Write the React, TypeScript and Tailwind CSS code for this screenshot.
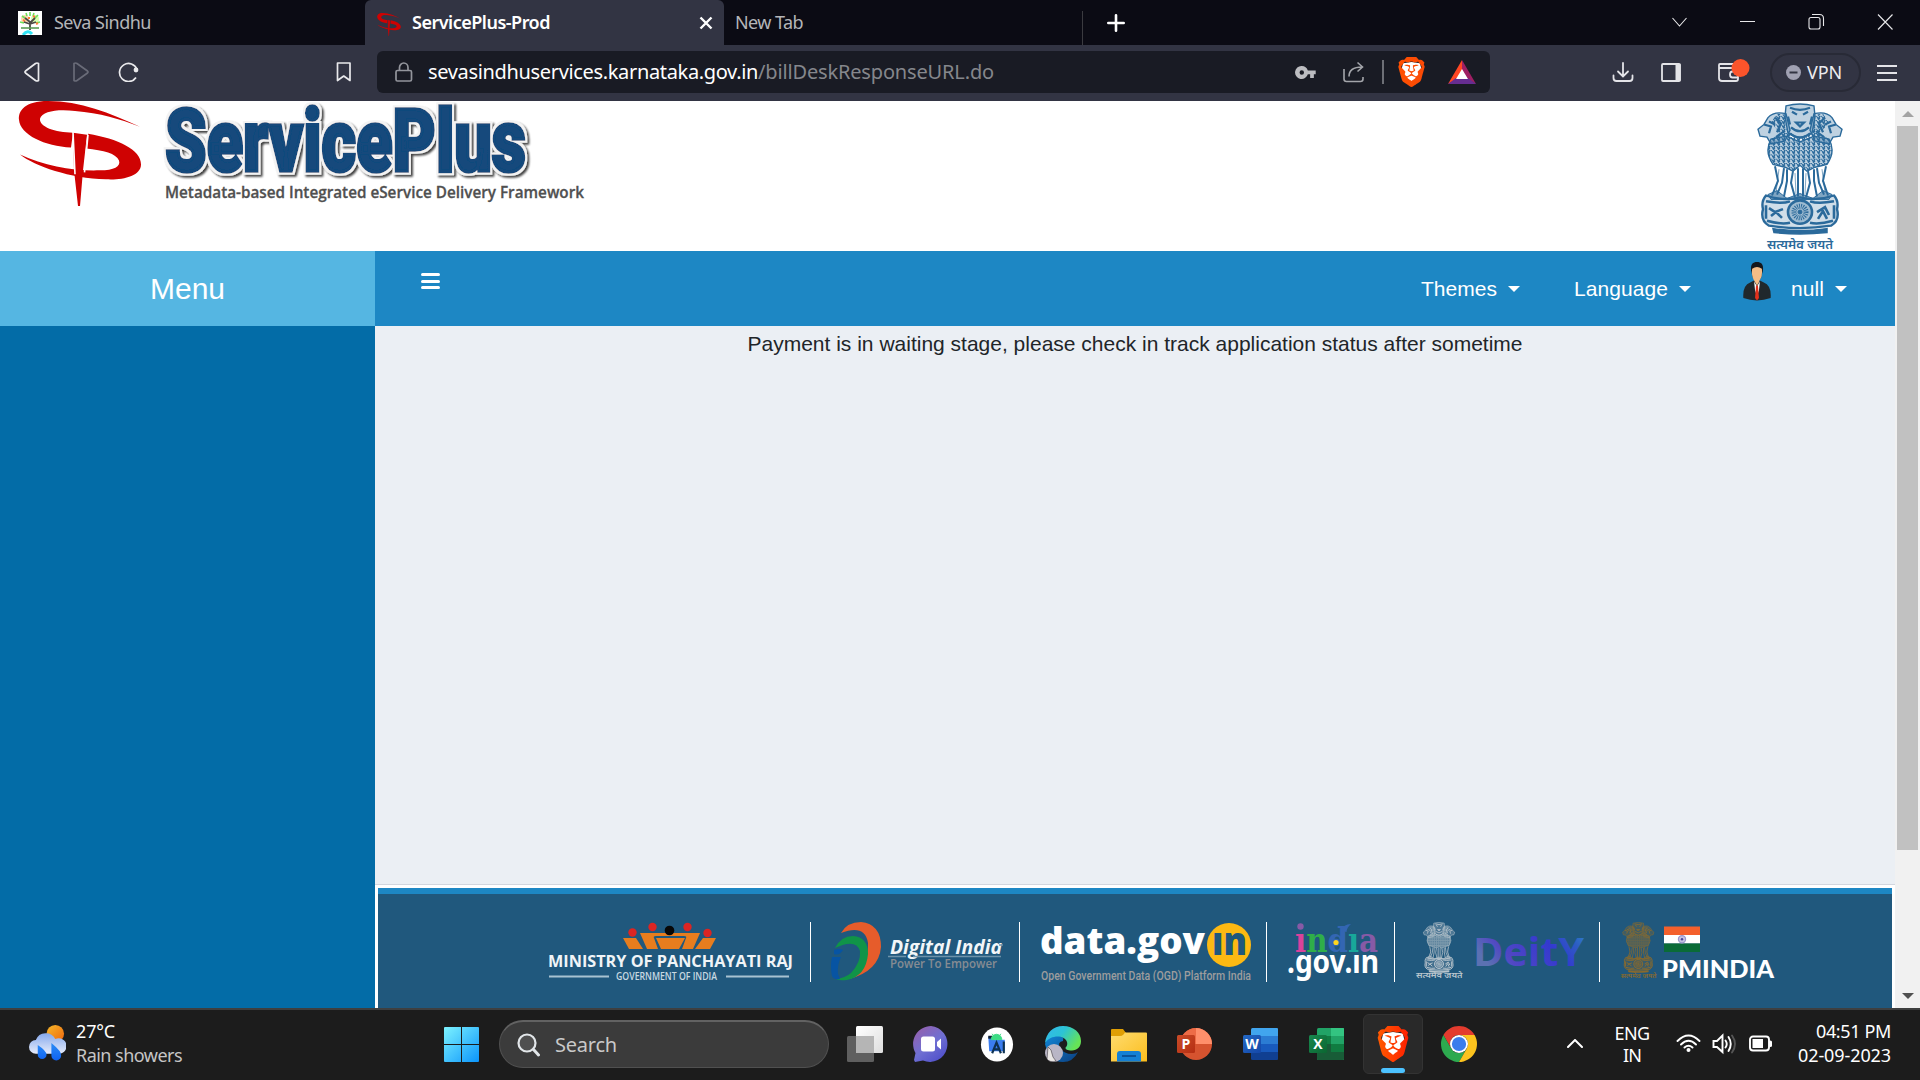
import { useLayoutEffect, useRef, useState } from "react";
import type { ReactNode } from "react";
import { SiBrave } from "react-icons/si";

/** Single-line text whose tracking is adjusted so that it fills a given width. */
function Fit({ w, className = "", children }: { w: number; className?: string; children: string }) {
  const ref = useRef<HTMLSpanElement>(null);
  const [gap, setGap] = useState(0);
  useLayoutEffect(() => {
    if (ref.current) {
      setGap((w - ref.current.getBoundingClientRect().width) / children.length);
    }
  }, []);
  return (
    <span ref={ref} className={"inline-block whitespace-pre " + className} style={{ letterSpacing: `${gap}px` }}>
      {children}
    </span>
  );
}

function ServiceMark({ className }: { className: string }) {
  return (
    <svg viewBox="18 0 124 106" className={className} preserveAspectRatio="none" fill="#cf0202">
      <path d="M140 26C110 12 80 0 48 0C25 0 18 10 19 19C20 34 45 46 71 47L73 32C55 32 39 26 40 18C42 10 58 8 75 10C100 12 120 18 140 26Z" />
      <path d="M88 33C118 38 141 49 141 64C141 76 122 80 106 79C70 78 35 66 20 54C45 66 75 71 100 70C114 70 121 66 119 60C116 53 104 50 86 48Z" />
      <path d="M73 32L87 34L83 70L80 106H78L74 70Z" />
      <path d="M73 31L75 74M88 34L84.500 72" stroke="currentColor" strokeWidth="1.600" />
    </svg>
  );
}

type EmblemProps = { id: string; color: string; className: string; textX?: number; textW?: number; boxX?: number; boxW?: number; size?: number };

function Emblem({ id, color, className, textX = 10, textW = 66, boxX = 0, boxW = 86, size = 13 }: EmblemProps) {
  return (
    <svg viewBox={`${boxX} 0 ${boxW} 152`} className={className} preserveAspectRatio="none" fill="none" stroke={color}>
      <defs>
        <pattern id={id} width="5" height="4.400" patternUnits="userSpaceOnUse">
          <path d="M0 1Q1.500 4 2.500 1T5 1M1 4L3 2.400" stroke={color} strokeWidth="1.500" fill="none" />
        </pattern>
      </defs>
      <g strokeWidth="1.400" fill={color} fillOpacity=".3">
        <path d="M29 3Q43 -1 57 3L58 14L55 31Q43 39 31 31L28 14Z" />
        <path d="M29 11Q17 8 11 15L7 22L1 27L3 34L10 35L14 42L28 39L33 28Z" />
        <path d="M57 11Q69 8 75 15L79 22L85 27L83 34L76 35L72 42L58 39L53 28Z" />
        <path d="M14 37Q7 50 16 63L28 66L36 70L43 64L50 70L58 66L70 63Q79 50 72 37L57 34L43 40L29 34Z" />
      </g>
      <path
        d="M14 37Q7 50 16 63L28 66L36 70L43 64L50 70L58 66L70 63Q79 50 72 37L57 28L43 36L29 28Z"
        fill={`url(#${id})`}
        stroke="none"
      />
      <path
        d="M29 12L20 11L14 20L25 34L30 30ZM57 12L66 11L72 20L61 34L56 30Z"
        fill={`url(#${id})`}
        stroke="none"
      />
      <path
        d="M35 9L40 12M51 9L46 12M39 20H47L43 24ZM34 25Q43 33 52 25M33 5Q43 9 53 5M31 14L33 22M55 14L53 22M7 22L14 24L12 31M79 22L72 24L74 31M18 15L24 21L20 30M68 15L62 21L66 30M19 35L27 29M67 35L59 29M12 19L18 22M74 19L68 22M33 31Q43 40 53 31"
        strokeWidth="2.200"
      />
      <path
        d="M18 65L21 80L15 95M27 67L25 82L20 94M30 68V80L27 96M36 70L34 82L38 97M41 67V96M46 67V96M51 70L53 82L49 97M57 68L57 80L60 96M60 67L62 82L67 94M69 65L66 80L71 95"
        strokeWidth="2"
      />
      <path d="M22 68L19 92M38 72L39 94M49 72L48 94M65 68L68 92" strokeWidth="1" opacity=".6" />
      <path d="M9 95Q4 101 6 109Q3 121 12 126Q43 131 74 126Q83 121 80 109Q82 101 77 95Q60 101 43 97Q26 101 9 95Z" strokeWidth="2.400" fill={color} fillOpacity=".22" />
      <path d="M11 94L20 90L30 98L43 93L56 98L66 90L75 94L72 99H14Z" fill={color} fillOpacity=".6" strokeWidth="1" />
      <path d="M9 101Q25 104 33 101M53 101Q61 104 77 101M10 121Q24 125 33 123M53 123Q62 125 76 121" strokeWidth="2.600" />
      <path d="M12 108L18 112L26 109M14 116L19 112L25 118M60 112L68 107L72 115M61 119L66 111L70 119M77 105V119M9 105V119" strokeWidth="2.600" />
      <circle cx="43" cy="112" r="12" strokeWidth="2.600" fill={color} fillOpacity=".3" />
      <circle cx="43" cy="112" r="6" strokeWidth="5" strokeDasharray=".9 1" />
      <circle cx="43" cy="112" r="2" fill={color} />
      <path d="M16 129Q43 133 70 129V133Q43 136 17 133Z" fill={color} strokeWidth="1.500" />
      <text
        x={textX}
        y="150"
        textLength={textW}
        lengthAdjust="spacingAndGlyphs"
        fill={color}
        stroke="none"
        fontSize={size}
        fontWeight="600"
        fontFamily="'Noto Sans Devanagari','Noto Sans',sans-serif"
      >
        सत्यमेव जयते
      </text>
    </svg>
  );
}

function Brave({ className, id, from, to }: { className: string; id: string; from: string; to: string }) {
  return (
    <span className={"relative block " + className}>
      <svg viewBox="0 0 24 24" className="absolute inset-0 size-full" preserveAspectRatio="none">
        <defs>
          <linearGradient id={id} x1="0" x2="1">
            <stop offset="0" stopColor={from} />
            <stop offset="1" stopColor={to} />
          </linearGradient>
        </defs>
        <path d="M5.5 5L12 4L18.500 5L19.500 9L17 18L12 21L7 18L4.500 9Z" fill="#fff" />
      </svg>
      <SiBrave preserveAspectRatio="none" className="absolute inset-0 size-full" style={{ fill: `url(#${id})` }} />
    </span>
  );
}

function TabStrip() {
  return (
    <div className="flex h-[45px] bg-[#0b0b14] text-[18px] leading-[45px] text-[#b4b5b8]">
      <div className="flex w-[365px] items-center pl-[18px]">
        <svg viewBox="0 0 24 24" className="h-6 w-6">
          <rect width="24" height="24" fill="#fff" />
          <circle cx="7" cy="8" r="4" fill="#ffd9b0" />
          <circle cx="17" cy="8" r="4" fill="#d8ffb0" />
          <path d="M4 5l3 2M2 11l4 1M20 4l-3 3M22 11l-4 1M12 1v4M8 2l1 3M16 2l-1 3" stroke="#6fe05a" strokeWidth="1.600" />
          <path d="M5 9l2 1M15 5l2 1M18 13l2-1M10 7h2" stroke="#ff7d3a" strokeWidth="2" />
          <path d="M12 19V11L7 7M12 12l5-5M12 13l6-2M12 13l-6-2" stroke="#4c4a45" strokeWidth="1.800" fill="none" />
          <path d="M3 17h18" stroke="#5a9d55" strokeWidth="1.600" />
          <path d="M5 24q5-6 9-1" stroke="#31e4f5" strokeWidth="3" fill="none" />
        </svg>
        <Fit w={97} className="ml-3">Seva Sindhu</Fit>
      </div>
      <div className="flex w-[359px] items-center rounded-t-md bg-[#323443] pl-3 text-white">
        <ServiceMark className="mt-1 h-[23px] w-6 text-[#323443]" />
        <Fit w={138} className="ml-[11px] font-semibold">ServicePlus-Prod</Fit>
        <svg viewBox="0 0 14 14" className="ml-auto mr-[11px] h-[14px] w-[14px]" stroke="#fff" strokeWidth="2.4">
          <path d="M1.500 1.500l11 11M12.500 1.500l-11 11" />
        </svg>
      </div>
      <div className="flex w-[359px] items-center pl-[11px]">
        <Fit w={68}>New Tab</Fit>
        <div className="ml-auto mt-[11px] h-[34px] w-px bg-[#3b3b40]" />
      </div>
      <svg viewBox="0 0 18 18" className="ml-6 mt-[14px] h-[18px] w-[18px]" stroke="#fff" strokeWidth="2.600" strokeLinecap="round">
        <path d="M9 1.300v15.400M1.300 9h15.400" />
      </svg>
      <svg viewBox="0 0 221 17" className="ml-auto mr-[27px] mt-[13px] h-[17px] w-[221px]" fill="none" stroke="#e8e8ea" strokeWidth="1.100">
        <path d="M.5 5l7 8l7-8M68 8.500h15" />
        <rect x="137" y="4.500" width="11" height="11.500" rx="2" />
        <path d="M140 1.500h7.500q4 0 4 4v7.500M206 1.500l14.500 15M220.500 1.500l-14.500 15" />
      </svg>
    </div>
  );
}

function Toolbar() {
  return (
    <div className="flex h-14 items-start bg-[#323443]">
      <svg viewBox="0 0 340 20" className="ml-6 mt-[17px] h-5 w-[340px]" fill="none" stroke="#e9e9ec" strokeWidth="1.700" strokeLinejoin="round">
        <path d="M14.500 1.500v17q-1.500 1-3 0L1.500 11q-1-1 0-2L11.500 1.500q1.500-1 3 0Z" />
        <path stroke="#696b78" d="M50 1.500v17q1.500 1 3 0L63.500 11q1-1 0-2L53 1.500q-1.500-1-3 0Z" />
        <path d="M112 15.500A9 9 0 1 1 113 7.500" />
        <circle cx="112" cy="8" r="2.400" fill="#e9e9ec" stroke="none" />
        <path d="M313.500 1h12.500v17.500l-6.250-4.500l-6.250 4.500Z" />
      </svg>
      <div className="ml-[13px] mt-[6px] flex h-[42px] w-[1113px] items-center rounded-md bg-[#191b24] text-[20px]">
        <svg viewBox="0 0 18 20" className="ml-[18px] h-5 w-[18px]" fill="none" stroke="#93959c" strokeWidth="1.700">
          <rect x="1" y="8.500" width="15.500" height="10.500" rx="1.500" />
          <path d="M4.500 8.500V5.500a4.250 4.500 0 0 1 8.500 0v3" />
        </svg>
        <Fit w={330} className="ml-[15px] text-white">sevasindhuservices.karnataka.gov.in</Fit>
        <Fit w={236} className="text-[#85878c]">/billDeskResponseURL.do</Fit>
        <svg viewBox="0 0 22 14" className="ml-auto h-[13px] w-[21px]">
          <path
            fill="#bcbdc1"
            fillRule="evenodd"
            d="M7 0a7 7 0 0 1 6.500 4.800H22v4h-2V13h-4V8.800h-2.500A7 7 0 1 1 7 0ZM7 4.600a2.400 2.400 0 1 0 0 4.800a2.400 2.400 0 0 0 0-4.800Z"
          />
        </svg>
        <svg viewBox="0 0 22 22" className="ml-[27px] h-[22px] w-[22px]" fill="none" stroke="#a3a5aa" strokeWidth="1.600">
          <path d="M1 8v10q0 2.500 2.500 2.500h14q2.500 0 2.500-2.500v-2M6 15.500Q6 6 19 6M14.500 1.500l5 4.500l-5 4.500" />
        </svg>
        <div className="ml-[17px] h-6 w-[2px] bg-[#6d6f76]" />
        <Brave className="ml-[12px] h-[30px] w-[31px]" id="braveBar" from="#ff5000" to="#fb4a06" />
        <svg viewBox="0 0 28 24" className="ml-[21px] mr-[14px] h-6 w-7">
          <path d="M14 0L0 24L14 16Z" fill="#ff4724" />
          <path d="M14 0L28 24L14 16Z" fill="#9e1f63" />
          <path d="M0 24H28L20 18H8Z" fill="#662d91" />
          <path d="M14 9L8 19H20Z" fill="#fff" />
        </svg>
      </div>
      <svg viewBox="0 0 140 24" className="ml-[122px] mt-[13px] h-6 w-[140px]" fill="none" stroke="#e4e4e8" strokeWidth="1.800">
        <path d="M11 5v13M6 13.500l5 5l5-5M1.500 17.500v2.500q0 3 3 3h13q3 0 3-3v-2.500" strokeLinecap="round" />
        <rect x="50" y="6" width="18" height="17" rx="1" />
        <path d="M66 6v17" strokeWidth="5" />
        <path d="M108 6h15q3 0 3 3v12q0 2-2 2h-14q-3 0-3-3V7q0-1 1-1ZM107 10h18M126 13.500h-5.500q-2.500 0-2.500 3t2.500 3h5.500" />
        <ellipse cx="128.500" cy="10" rx="9" ry="9" fill="#fb542b" stroke="none" />
      </svg>
      <div className="ml-[18px] mt-2 flex h-[39px] w-[91px] items-center rounded-full border-2 border-[#282a36] pl-[14px] text-[18px] text-[#ececf0]">
        <svg viewBox="0 0 15 15" className="h-[15px] w-[15px]">
          <circle cx="7.500" cy="7.500" r="7.500" fill="#a0a1b2" />
          <path d="M3.500 7.500h8" stroke="#323443" strokeWidth="2" />
        </svg>
        <Fit w={35} className="ml-[6px]">VPN</Fit>
      </div>
      <div className="ml-4 mt-5 flex w-5 flex-col gap-[5px]">
        <div className="h-[2px] bg-[#e4e4e8]" />
        <div className="h-[2px] bg-[#e4e4e8]" />
        <div className="h-[2px] bg-[#e4e4e8]" />
      </div>
    </div>
  );
}

function Header() {
  return (
    <header className="flex h-[150px] shrink-0 justify-between bg-white">
      <div className="flex">
        <ServiceMark className="ml-[18px] h-[105px] w-[124px] text-white" />
        <svg viewBox="0 0 440 112" className="ml-[18px] h-[112px] w-[440px]">
          <defs>
            <filter id="wordShadow" x="-5%" y="-10%" width="115%" height="130%">
              <feMorphology in="SourceAlpha" operator="dilate" radius="2" result="wide" />
              <feFlood floodColor="#f3f3f3" />
              <feComposite in2="wide" operator="in" result="rim" />
              <feGaussianBlur in="wide" stdDeviation="1.300" />
              <feOffset dx="1.500" dy="2" />
              <feComponentTransfer result="shade">
                <feFuncA type="linear" slope=".75" />
              </feComponentTransfer>
              <feMerge>
                <feMergeNode in="shade" />
                <feMergeNode in="rim" />
                <feMergeNode in="SourceGraphic" />
              </feMerge>
            </filter>
          </defs>
          <text
            x="5"
            y="70"
            textLength="361"
            lengthAdjust="spacingAndGlyphs"
            fontFamily="Roboto, sans-serif"
            fontWeight="900"
            fontSize="87"
            strokeLinejoin="miter"
            fill="#124a7c"
            stroke="#124a7c"
            strokeWidth="3.600"
            filter="url(#wordShadow)"
          >
            ServicePlus
          </text>
          <text x="5" y="97" textLength="419" lengthAdjust="spacingAndGlyphs" fontFamily="'Open Sans', sans-serif" fontWeight="600" fontSize="16" fill="#505050" stroke="#505050" strokeWidth=".3">
            Metadata-based Integrated eService Delivery Framework
          </text>
        </svg>
      </div>
      <Emblem id="maneMain" color="#2b6a9b" className="mr-[52px] mt-[2px] h-[148px] w-[86px]" />
    </header>
  );
}

function Caret() {
  return <div className="h-0 w-0 border-x-[6px] border-t-[6px] border-x-transparent border-t-white" />;
}

function NavBar() {
  return (
    <nav className="flex h-[75px] bg-[#1d87c4] text-[21px] leading-[75px] text-white">
      <div className="ml-[46px] mt-[22px] flex h-4 w-[19px] flex-col justify-between">
        <div className="h-[3px] rounded-sm bg-white" />
        <div className="h-[3px] rounded-sm bg-white" />
        <div className="h-[3px] rounded-sm bg-white" />
      </div>
      <div className="ml-auto flex items-center">
        <Fit w={76}>Themes</Fit>
        <div className="ml-[11px]"><Caret /></div>
      </div>
      <div className="ml-[54px] flex items-center">
        <Fit w={94}>Language</Fit>
        <div className="ml-[11px]"><Caret /></div>
      </div>
      <div className="ml-[51px] flex items-center">
        <svg viewBox="0 0 30 40" className="-mt-[15px] h-[39px] w-[30px]">
          <path d="M9 9C8 2 11 0 15 0S22 2 21 9L19 17H11Z" fill="#15171b" />
          <path d="M10 7Q15 3 20 7Q21 15 17.500 19V23L15 27L12 23V19Q9 14 10 7Z" fill="#f5bd86" />
          <path d="M1 37Q0 24 8 21L12 19L15 24L18 19L22 21Q30 24 29 37Q15 42 1 37Z" fill="#20282c" />
          <path d="M12 20L15 25L18 20L17 29L15 35L13 29Z" fill="#fff" />
          <path d="M14 24H16L17 37L15 39.500L13 37Z" fill="#e2311c" />
        </svg>
        <Fit w={33} className="ml-[19px]">null</Fit>
        <div className="ml-[11px] mr-12"><Caret /></div>
      </div>
    </nav>
  );
}

function Divider() {
  return <div className="h-[60px] w-px shrink-0 bg-white" />;
}

function Footer() {
  return (
    <footer className="flex h-full items-start border-x-[3px] border-white bg-[#20587d] pt-[28px]">
      <svg viewBox="0 0 262 60" className="ml-[170px] h-[60px] w-[262px]" fontFamily="'Open Sans', sans-serif">
        <g fill="#e77d1e">
          <path d="M75 16H88L95 27H81Z" />
          <path d="M92 11H152L145 27H134L138 16Q139 14 136 14H108Q105 14 106 16L110 27H99Z" />
          <path d="M108 16H137L131 27H113Z" />
          <path d="M155 16H168L162 27H147Z" />
        </g>
        <g fill="#dc2523">
          <circle cx="84.500" cy="10.500" r="4.200" />
          <circle cx="104.500" cy="5" r="4.200" />
          <circle cx="139.500" cy="5" r="4.200" />
          <circle cx="159.500" cy="11" r="4.200" />
        </g>
        <circle cx="121.500" cy="8.500" r="4.800" fill="#070707" />
        <text x="0" y="45" textLength="245" lengthAdjust="spacingAndGlyphs" fontSize="16.500" fontWeight="700" fill="#f0f4f7">
          MINISTRY OF PANCHAYATI RAJ
        </text>
        <path d="M1 54.500H61M178 54.500H241" stroke="#a8c2d1" strokeWidth="2.200" />
        <text x="68" y="57.500" textLength="101" lengthAdjust="spacingAndGlyphs" fontSize="10" fontWeight="600" fill="#c8d8e2">
          GOVERNMENT OF INDIA
        </text>
      </svg>
      <Divider />
      <svg viewBox="0 0 208 60" className="h-[60px] w-[208px]" fontFamily="'Open Sans', sans-serif">
        <path d="M30 11Q36 0 50 0Q70 2 70 25Q68 49 38 57Q58 43 57 21Q54 2 30 11Z" fill="#e65c2b" />
        <path d="M24 26Q30 14 42 14Q57 15 57 32Q55 54 36 58Q28 59 25 57Q34 56 40 51Q50 40 49 29Q45 16 24 26Z" fill="#109448" />
        <path d="M23 28Q28 26 32 28Q28 34 23 32ZM21 35H30Q26 43 27 52L29 57Q23 58 21 54Q19 44 21 35Z" fill="#0754a3" />
        <text x="79" y="32" textLength="112" lengthAdjust="spacingAndGlyphs" fontSize="19" fontWeight="700" fontStyle="italic" fill="#f2f6f8">
          Digital India
        </text>
        <path d="M188 23H192M77 34.500H95M102 34.500H190" stroke="#6d93ab" strokeWidth="1.300" />
        <text x="79" y="46" textLength="107" lengthAdjust="spacingAndGlyphs" fontSize="12" fontWeight="600" fill="#868c93">
          Power To Empower
        </text>
      </svg>
      <Divider />
      <svg viewBox="0 0 246 60" className="h-[60px] w-[246px]" fontFamily="'Open Sans', sans-serif">
        <text x="20" y="32" textLength="165" lengthAdjust="spacingAndGlyphs" fontSize="37" fontWeight="800" fill="#fff">
          data.gov
        </text>
        <circle cx="209" cy="23" r="22" fill="#fdb913" />
        <text x="192" y="33" textLength="35" lengthAdjust="spacingAndGlyphs" fontSize="39" fontWeight="800" fill="#20587d">
          ın
        </text>
        <text x="21" y="57.500" textLength="210" lengthAdjust="spacingAndGlyphs" fontFamily="Roboto, sans-serif" fontSize="12.500" fontWeight="500" fill="#9d9d9d">
          Open Government Data (OGD) Platform India
        </text>
      </svg>
      <Divider />
      <svg viewBox="0 0 127 60" className="h-[60px] w-[127px]" fontWeight="700">
        <text x="28" y="30" textLength="83" lengthAdjust="spacingAndGlyphs" fontFamily="'DejaVu Serif', serif" fontSize="34">
          <tspan fill="#d9429b">ı</tspan>
          <tspan fill="#2fae49">n</tspan>
          <tspan fill="#3366b3">d</tspan>
          <tspan fill="#18a79a">ı</tspan>
          <tspan fill="#875aa6">a</tspan>
        </text>
        <circle cx="33.500" cy="4.500" r="3.200" fill="#875aa6" />
        <path d="M75 9Q76 2 84 2Q80 5 79.500 10Z" fill="#3366b3" />
        <circle cx="69" cy="20.500" r="3.800" fill="#3366b3" />
        <circle cx="69" cy="20.500" r="2.600" fill="#ffd51c" />
        <text x="20" y="51" textLength="92" lengthAdjust="spacingAndGlyphs" fontFamily="'Noto Sans', sans-serif" fontSize="33" fontWeight="700" fill="#fff">
          .gov.ın
        </text>
      </svg>
      <Divider />
      <div className="flex w-[204px]">
        <Emblem id="maneDeity" color="#b9c5cd" className="ml-[19px] h-[57px] w-[50px]" boxX={-24} boxW={134} textX={-19} textW={125} size={21} />
        <svg viewBox="0 0 120 60" className="ml-[8px] h-[60px] w-[120px]">
          <defs>
            <linearGradient id="deity" x1="0" x2="1" y1=".4" y2="0">
              <stop offset="0" stopColor="#5b71b2" />
              <stop offset=".2" stopColor="#5147c4" />
              <stop offset=".6" stopColor="#3439cf" />
              <stop offset=".8" stopColor="#2d5cc4" />
              <stop offset="1" stopColor="#2e8fc9" />
            </linearGradient>
          </defs>
          <text
            x="1"
            y="44"
            textLength="111"
            lengthAdjust="spacingAndGlyphs"
            className="[font-variant-ligatures:none]"
            fontFamily="'Open Sans', sans-serif"
            fontWeight="700"
            fontSize="40"
            fill="url(#deity)"
          >
            DeitY
          </text>
        </svg>
      </div>
      <Divider />
      <div className="flex">
        <Emblem id="manePm" color="#8a6a2c" className="ml-[20px] h-[57px] w-[38px]" boxX={-6} boxW={102} textX={-4} textW={96} size={18} />
        <svg viewBox="0 0 116 60" className="ml-[5px] h-[60px] w-[116px]">
          <path d="M1 4.500H37V13H1Z" fill="#f4602c" />
          <path d="M1 13H37V21.500H1Z" fill="#fff" />
          <path d="M1 21.500H37V30H1Z" fill="#0a6b37" />
          <circle cx="19" cy="17.300" r="3.600" fill="#c5c2e2" stroke="#9a95cc" strokeWidth="1.200" />
          <circle cx="19" cy="17.300" r="1.200" fill="#4a459b" />
          <text x="-1" y="56" textLength="112" lengthAdjust="spacingAndGlyphs" fontFamily="Lato, sans-serif" fontWeight="900" fontSize="25.500" fill="#fff">
            PMINDIA
          </text>
        </svg>
      </div>
    </footer>
  );
}

function Page() {
  return (
    <div className="flex h-[907px] bg-white font-['Liberation_Sans',Arial,sans-serif]">
      <div className="flex w-[1895px] flex-col">
        <Header />
        <div className="flex flex-1">
          <aside className="w-[375px] bg-[#036ca7]">
            <div className="flex h-[75px] items-center justify-center bg-[#55b6e2] text-[30px] text-white">Menu</div>
          </aside>
          <div className="flex w-[1520px] flex-col">
            <NavBar />
            <main className="flex h-[559px] justify-center border-b border-[#d2d6de] bg-[#ebeff4] pt-[3px] text-[21px] leading-[30px] text-[#212529]">
              <p><Fit w={775}>Payment is in waiting stage, please check in track application status after sometime</Fit></p>
            </main>
            <div className="mx-[3px] mt-[3px] h-[6px] bg-[#1d87c4]" />
            <div className="h-[114px]"><Footer /></div>
          </div>
        </div>
      </div>
      <div className="flex w-[25px] flex-col items-center bg-[#f1f1f1]">
        <div className="mt-[10px] h-0 w-0 border-x-[6px] border-b-[6px] border-x-transparent border-b-[#a3a3a3]" />
        <div className="mt-[9px] h-[724px] w-[21px] bg-[#c1c1c1]" />
        <div className="mb-[9px] mt-auto h-0 w-0 border-x-[6px] border-t-[6px] border-x-transparent border-t-[#505050]" />
      </div>
    </div>
  );
}

function Slot({ children }: { children: ReactNode }) {
  return <div className="flex h-[60px] w-[66px] items-center justify-center">{children}</div>;
}

function OfficeBadge({ letter, from, to, id }: { letter: string; from: string; to: string; id: string }) {
  return (
    <>
      <defs>
        <linearGradient id={id} x1="0" y1="0" x2="1" y2="1">
          <stop offset="0" stopColor={from} />
          <stop offset="1" stopColor={to} />
        </linearGradient>
      </defs>
      <rect x="0" y="9" width="18" height="18" rx="1.500" fill={`url(#${id})`} />
      <text x="9" y="23.200" textAnchor="middle" fontFamily="'Open Sans', sans-serif" fontWeight="700" fontSize="14" fill="#fff">
        {letter}
      </text>
    </>
  );
}

function Taskbar() {
  return (
    <div className="flex h-[72px] border-t-2 border-[#3e3f40] bg-[#1c1c1c] text-[18px] leading-6 text-white">
      <div className="flex w-[444px] pl-[29px] pt-[9px]">
        <svg viewBox="0 0 38 38" className="mt-[5px] h-[38px] w-[37px]">
          <defs>
            <linearGradient id="sun" x1="0" y1="0" x2="1" y2="1">
              <stop offset="0" stopColor="#f5b92b" />
              <stop offset="1" stopColor="#f0640c" />
            </linearGradient>
            <linearGradient id="cloud" x1="0" y1="0" x2="0" y2="1">
              <stop offset="0" stopColor="#86a9ec" />
              <stop offset="1" stopColor="#e6ecfb" />
            </linearGradient>
            <linearGradient id="drop" x1="0" y1="0" x2="0" y2="1">
              <stop offset="0" stopColor="#2b8cf5" />
              <stop offset="1" stopColor="#0f62f0" />
            </linearGradient>
          </defs>
          <circle cx="27" cy="9.500" r="9" fill="url(#sun)" />
          <path d="M7 16A11 11 0 0 1 27 15A8 8 0 1 1 29 30H7A7 7 0 0 1 7 16Z" fill="url(#cloud)" />
          <path d="M9 21Q18 27 18 31A4.500 4.500 0 0 1 9 31ZM23 19Q34 28 33 32A5 5 0 0 1 23 32Z" fill="url(#drop)" />
        </svg>
        <div className="ml-[10px] flex flex-col items-start">
          <Fit w={39}>27°C</Fit>
          <Fit w={106} className="text-[#c5c5c5]">Rain showers</Fit>
        </div>
      </div>
      <svg viewBox="0 0 35 35" className="mt-[17px] h-[35px] w-[35px]">
        <defs>
          <linearGradient id="win" x1="0" y1="0" x2="1" y2="1">
            <stop offset="0" stopColor="#7df3ff" />
            <stop offset="1" stopColor="#0b94fb" />
          </linearGradient>
        </defs>
        <path d="M1 0H17V17H0V1Q0 0 1 0ZM18 0H34Q35 0 35 1V17H18ZM0 18H17V35H1Q0 35 0 34ZM18 18H35V34Q35 35 34 35H18Z" fill="url(#win)" />
      </svg>
      <div className="ml-5 mt-[10px] flex h-12 w-[330px] items-center rounded-full border border-t-2 border-[#505050] border-t-[#626262] bg-[#3b3b3b] text-[20px] text-[#c9c9c9]">
        <svg viewBox="0 0 24 24" className="ml-[17px] h-6 w-6" fill="#4f4f4f" stroke="#e2e6e9" strokeLinecap="round">
          <circle cx="10" cy="10" r="8.500" strokeWidth="2.200" />
          <path d="M16.500 16.500l5 5.500" strokeWidth="3" />
        </svg>
        <Fit w={62} className="ml-[14px]">Search</Fit>
      </div>
      <div className="ml-[3px] mt-1 flex">
        <Slot>
          <svg viewBox="0 0 36 36" className="h-9 w-9">
            <defs>
              <linearGradient id="tv" x1="0" y1="0" x2="1" y2="1">
                <stop offset="0" stopColor="#fff" />
                <stop offset="1" stopColor="#dedede" />
              </linearGradient>
            </defs>
            <rect x="9" y="0" width="27" height="27" rx="1.500" fill="url(#tv)" />
            <rect x="0" y="10" width="27" height="26" rx="1.500" fill="#5f5f5f" />
            <path d="M9 10H27V27H9Z" fill="#b5b5b5" />
          </svg>
        </Slot>
        <Slot>
          <svg viewBox="0 0 36 36" className="h-9 w-9">
            <defs>
              <linearGradient id="chat" x1=".1" y1=".2" x2=".7" y2="1">
                <stop offset="0" stopColor="#8e63b4" />
                <stop offset=".5" stopColor="#6f6fd2" />
                <stop offset="1" stopColor="#5252cb" />
              </linearGradient>
            </defs>
            <path d="M18 0A17.500 18 0 1 1 10 34.500L2 36L1 34L2.500 27A18 18 0 0 1 18 0Z" fill="url(#chat)" />
            <rect x="8" y="10.500" width="14" height="15" rx="2.500" fill="#fff" />
            <path d="M24 16L28 12.500V23.500L24 20Z" fill="#fff" />
          </svg>
        </Slot>
        <Slot>
          <svg viewBox="0 0 34 36" className="h-[35px] w-[34px]">
            <ellipse cx="17" cy="18" rx="16.500" ry="17.500" fill="#fff" />
            <path d="M8 10H13L14 13H25V25H9Z" fill="#3b7df0" />
            <path d="M8 9H12V12H8Z" fill="#123" />
            <path d="M11 13A5.500 5.500 0 0 1 22 13ZM12 7l2 3M21 7l-2 3" fill="#3ddc84" stroke="#3ddc84" />
            <path d="M12 27L16.500 16L21 27M14 23H19M24 15V27" fill="none" stroke="#0e3150" strokeWidth="2.200" />
          </svg>
        </Slot>
        <Slot>
          <svg viewBox="0 0 36 36" className="h-9 w-9">
            <defs>
              <linearGradient id="edgeTop" x1="0" y1="0" x2="1" y2=".5">
                <stop offset="0" stopColor="#34b7ec" />
                <stop offset=".5" stopColor="#2cc3d5" />
                <stop offset="1" stopColor="#66e356" />
              </linearGradient>
              <linearGradient id="edgeLow" x1="0" y1="0" x2="1" y2="1">
                <stop offset="0" stopColor="#1187d8" />
                <stop offset="1" stopColor="#0b3f80" />
              </linearGradient>
            </defs>
            <path d="M0 18Q2 9 11 9Q20 9 18 15Q12 16 15 22Q19 28 27 28Q31 28 33 26Q28 36 18 36Q4 36 0 18Z" fill="url(#edgeLow)" />
            <path d="M0 17C1 7 8 0 18 0C29 0 36 7 36 15C36 21 32 24.500 27 24.500C22 24.500 20.500 23 20.500 22C20.500 21 23 20 22 16C20 9 6 8 0 17Z" fill="url(#edgeTop)" />
            <circle cx="9" cy="27" r="9" fill="#b9b6c6" />
            <path d="M2 33L3 21L6 24L8 31L11 35Q5 37 2 33Z" fill="#e9e6e4" stroke="#565058" strokeWidth=".7" />
          </svg>
        </Slot>
        <Slot>
          <svg viewBox="0 0 36 33" className="mt-[2px] h-[33px] w-9">
            <defs>
              <linearGradient id="folder" x1="0" y1="0" x2="1" y2="1">
                <stop offset="0" stopColor="#ffdc6f" />
                <stop offset="1" stopColor="#fbbd1d" />
              </linearGradient>
            </defs>
            <path d="M0 1Q0 0 1 0H12L15 4V8H0Z" fill="#e09f05" />
            <path d="M0 7H9Q11 7 12.500 5.500L14 3.500H35Q36 3.500 36 4.500V32.500H0Z" fill="url(#folder)" />
            <path d="M6 32.500V25Q6 22 9 22H27Q30 22 30 25V32.500Z" fill="#1580d4" />
            <path d="M11 27H25" stroke="#0a4f94" strokeWidth="1.800" />
          </svg>
        </Slot>
        <Slot>
          <svg viewBox="0 0 36 36" className="h-9 w-9">
            <circle cx="19" cy="18" r="16" fill="#d6532f" />
            <path d="M19 2A16 16 0 0 0 3 18H19Z" fill="#ed6c47" />
            <path d="M19 2A16 16 0 0 1 35 18H19Z" fill="#ff8f6b" />
            <OfficeBadge letter="P" from="#ca4c28" to="#b52e12" id="ppt" />
          </svg>
        </Slot>
        <Slot>
          <svg viewBox="0 0 36 36" className="h-9 w-9">
            <path d="M9.500 2H34Q35 2 35 3V10H8V3.500Q8 2 9.500 2Z" fill="#41a5ee" />
            <path d="M8 10H35V18H8Z" fill="#2b7cd3" />
            <path d="M8 18H35V26H8Z" fill="#185abd" />
            <path d="M8 26H35V33Q35 34 34 34H9.500Q8 34 8 32.500Z" fill="#103f91" />
            <OfficeBadge letter="W" from="#2368c4" to="#1447a8" id="word" />
          </svg>
        </Slot>
        <Slot>
          <svg viewBox="0 0 36 36" className="h-9 w-9">
            <path d="M9.500 2H34Q35 2 35 3V33Q35 34 34 34H9.500Q8 34 8 32.500V3.500Q8 2 9.500 2Z" fill="#21a366" />
            <path d="M22 2H34Q35 2 35 3V10H22Z" fill="#33c481" />
            <path d="M8 10H22V18H8ZM22 18H35V26H22Z" fill="#107c41" />
            <path d="M8 18H22V26H35V33Q35 34 34 34H9.500Q8 34 8 32.500Z" fill="#185c37" />
            <OfficeBadge letter="X" from="#18884f" to="#0b6631" id="excel" />
          </svg>
        </Slot>
        <Slot>
          <div className="flex h-[60px] w-[60px] flex-col items-center rounded-md border border-[#333] bg-[#292929]">
            <Brave className="mt-[11px] h-9 w-9" id="braveTask" from="#ff5a00" to="#ff2000" />
            <div className="mt-[6px] h-[5px] w-6 rounded-full bg-[#4cc2ff]" />
          </div>
        </Slot>
        <Slot>
          <svg viewBox="2 2 44 44" className="h-9 w-9">
            <path d="M4.950 13A22 22 0 0 1 43.050 13H24A11 11 0 0 0 14.470 29.500Z" fill="#e33b2e" />
            <path transform="rotate(-120 24 24)" d="M4.950 13A22 22 0 0 1 43.050 13H24A11 11 0 0 0 14.470 29.500Z" fill="#2da94f" />
            <path transform="rotate(120 24 24)" d="M4.950 13A22 22 0 0 1 43.050 13H24A11 11 0 0 0 14.470 29.500Z" fill="#fcc31e" />
            <circle cx="24" cy="24" r="11" fill="#fff" />
            <circle cx="24" cy="24" r="8.700" fill="#3a7cec" />
          </svg>
        </Slot>
      </div>
      <svg viewBox="0 0 16 9" className="ml-[75px] mt-[29px] h-[9px] w-4" fill="none" stroke="#fff" strokeWidth="2" strokeLinecap="round">
        <path d="M1 8L8 1L15 8" />
      </svg>
      <div className="ml-[31px] mt-3 flex w-[36px] flex-col items-center leading-[22px]">
        <Fit w={35}>ENG</Fit>
        <Fit w={18}>IN</Fit>
      </div>
      <svg viewBox="0 0 98 22" className="ml-[26px] mt-[23px] h-[22px] w-[98px]" fill="none" stroke="#fff" strokeWidth="1.900" strokeLinecap="round">
        <path d="M1.500 8Q12.500-3 23.500 8M5 11.500Q12.500 4 20 11.500M8.500 14.500Q12.500 11 16.500 14.500" />
        <circle cx="12.500" cy="17" r="2" fill="#fff" stroke="none" />
        <path d="M37.500 8H41L46.500 2.500V19L41 14H37.500ZM49.500 7.500Q52 11 49.500 14.500M52.500 4Q57 11 52.500 18" />
        <path d="M56 2.500Q62 11 56 19.500" stroke="#555" />
        <rect x="74" y="3.500" width="19" height="14" rx="3" />
        <path d="M94.500 9V12.500" strokeWidth="3" />
        <rect x="76.500" y="6" width="10.500" height="9" fill="#fff" stroke="none" />
      </svg>
      <div className="ml-auto mr-[29px] mt-[9px] flex flex-col items-end">
        <Fit w={75}>04:51 PM</Fit>
        <Fit w={93}>02-09-2023</Fit>
      </div>
    </div>
  );
}

export default function App() {
  return (
    <div className="h-[1080px] w-[1920px] overflow-hidden font-['Noto_Sans','Open_Sans',sans-serif]">
      <TabStrip />
      <Toolbar />
      <Page />
      <Taskbar />
    </div>
  );
}
